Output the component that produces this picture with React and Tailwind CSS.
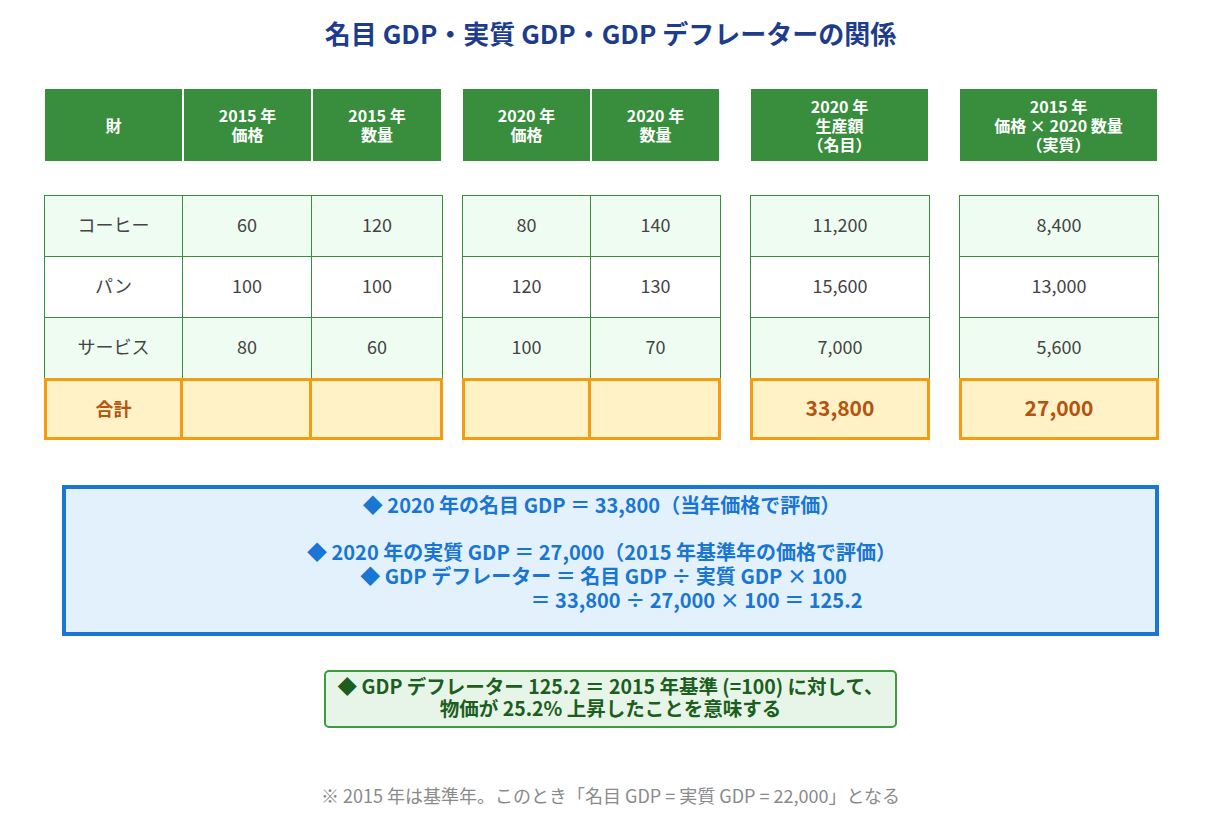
import React from 'react';

const FONT = { fontFamily: '"Noto Sans CJK JP", "Noto Sans", sans-serif' };

const rows = [
  { name: 'コーヒー', v: ['60', '120', '80', '140', '11,200', '8,400'], bg: 'bg-[#effcf1]' },
  { name: 'パン', v: ['100', '100', '120', '130', '15,600', '13,000'], bg: 'bg-white' },
  { name: 'サービス', v: ['80', '60', '100', '70', '7,000', '5,600'], bg: 'bg-[#effcf1]' },
];

// body column widths per group, shared by data rows and the total row
const groups = [
  { cols: [0, 1, 2], widths: ['w-[139px]', 'w-[129px]', 'w-[131px]'], total: [null, '', ''] },
  { cols: [3, 4], widths: ['w-[129px]', 'w-[130px]'], total: ['', ''] },
  { cols: [5], widths: ['w-[180px]'], total: ['33,800'] },
  { cols: [6], widths: ['w-[200px]'], total: ['27,000'] },
];

function HeadCell({ w, children }) {
  return (
    <div className={`${w} h-[72px] bg-[#388e3c] text-white font-bold text-[16px] leading-[19px] flex flex-col items-center justify-center text-center`}>
      {children}
    </div>
  );
}

function BodyGroup({ g }) {
  return (
    <div className="flex flex-col">
      {rows.map((r, ri) => (
        <div key={ri} className={`flex ${r.bg}`}>
          {g.cols.map((c, ci) => (
            <div
              key={c}
              className={`${g.widths[ci]} ${ri === 0 ? 'h-[62px] border-t' : 'h-[61px]'} border-b border-r border-[#388e3c] ${ci === 0 ? 'border-l' : ''} pb-[3px] flex items-center justify-center text-[18px] text-[#444]`}
            >
              {c === 0 ? r.name : r.v[c - 1]}
            </div>
          ))}
        </div>
      ))}
      <div className="flex -mt-px">
        {g.cols.map((c, ci) => (
          <div
            key={c}
            className={`${g.widths[ci]} h-[62px] bg-[#fef2c6] border-[3px] border-[#f39c12] ${ci > 0 ? 'border-l-0' : ''} pb-[2px] flex items-center justify-center font-bold text-[#b5530f] ${c === 0 ? 'text-[18px]' : 'text-[21px]'}`}
          >
            {c === 0 ? '合計' : g.total[ci]}
          </div>
        ))}
      </div>
    </div>
  );
}

export default function App() {
  return (
    <div className="w-[1221px] h-[836px] bg-white" style={FONT}>
      <h1 className="pt-[16px] text-center text-[26px] leading-[34px] font-bold text-[#1e3c8c]">
        名目 GDP・実質 GDP・GDP デフレーターの関係
      </h1>

      {/* header row */}
      <div className="mt-[39px] ml-[45px] flex">
        <div className="flex gap-[2px]">
          <HeadCell w="w-[137px]">財</HeadCell>
          <HeadCell w="w-[127px]"><span>2015 年</span><span>価格</span></HeadCell>
          <HeadCell w="w-[128px]"><span>2015 年</span><span>数量</span></HeadCell>
        </div>
        <div className="ml-[22px] flex gap-[2px]">
          <HeadCell w="w-[127px]"><span>2020 年</span><span>価格</span></HeadCell>
          <HeadCell w="w-[127px]"><span>2020 年</span><span>数量</span></HeadCell>
        </div>
        <div className="ml-[32px] flex">
          <HeadCell w="w-[177px]"><span>2020 年</span><span>生産額</span><span>（名目）</span></HeadCell>
        </div>
        <div className="ml-[32px] flex">
          <HeadCell w="w-[197px]"><span>2015 年</span><span>価格 × 2020 数量</span><span>（実質）</span></HeadCell>
        </div>
      </div>

      {/* body */}
      <div className="mt-[34px] ml-[44px] flex">
        <BodyGroup g={groups[0]} />
        <div className="ml-[19px]"><BodyGroup g={groups[1]} /></div>
        <div className="ml-[29px]"><BodyGroup g={groups[2]} /></div>
        <div className="ml-[29px]"><BodyGroup g={groups[3]} /></div>
      </div>

      {/* blue summary */}
      <div className="mt-[45px] ml-[62px] w-[1097px] h-[151px] border-[4px] border-[#1976d2] bg-[#e3f1fc] pt-[4px] pr-[18px] text-[#1976d2] font-bold text-[20px] leading-[24px] text-center">
        <p>◆ 2020 年の名目 GDP ＝ 33,800（当年価格で評価）</p>
        <p className="mt-[23px]">◆ 2020 年の実質 GDP ＝ 27,000（2015 年基準年の価格で評価）</p>
        <p className="pl-[4px]">◆ GDP デフレーター ＝ 名目 GDP ÷ 実質 GDP × 100</p>
        <p className="pl-[190px]">＝ 33,800 ÷ 27,000 × 100 ＝ 125.2</p>
      </div>

      {/* green conclusion */}
      <div className="mt-[34px] flex justify-center">
        <div className="w-[573px] h-[58px] border-2 border-[#3c9a40] rounded-[5px] bg-[#e7f5e8] text-[#1b5e20] font-bold text-[19.5px] leading-[22px] text-center pt-[3px] whitespace-nowrap">
          <p>◆ GDP デフレーター 125.2 ＝ 2015 年基準 (=100) に対して、</p>
          <p>物価が 25.2% 上昇したことを意味する</p>
        </div>
      </div>

      <p className="mt-[56px] text-center text-[18px] leading-[22px] text-[#8a8a8a]">
        ※ 2015 年は基準年。このとき「名目 GDP = 実質 GDP = 22,000」となる
      </p>
    </div>
  );
}
